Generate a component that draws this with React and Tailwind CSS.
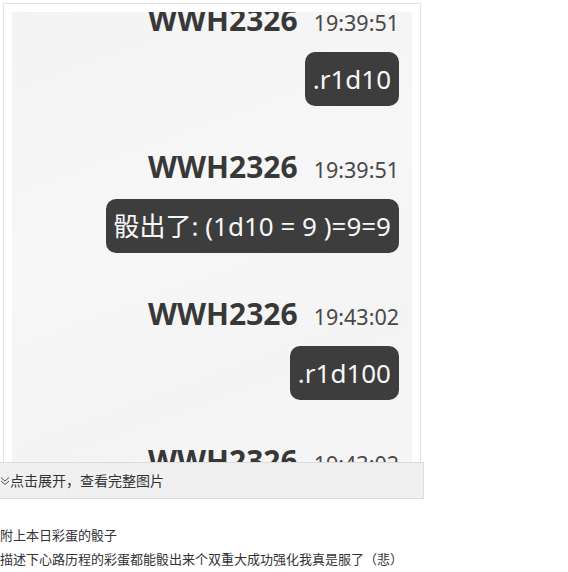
import { useState } from "react";

const messages = [
  { name: "WWH2326", time: "19:39:51", text: ".r1d10" },
  { name: "WWH2326", time: "19:39:51", text: "骰出了: (1d10 = 9 )=9=9" },
  { name: "WWH2326", time: "19:43:02", text: ".r1d100" },
  { name: "WWH2326", time: "19:43:02", text: ".r1d100" },
];

function ChatRow({ msg }) {
  return (
    <div className="flex flex-col items-end mb-[43px]">
      <div className="flex items-baseline justify-end gap-[16px] leading-[36px] h-[36px]">
        <span className="text-[30px] font-bold text-[#383838]">{msg.name}</span>
        <span className="text-[21.5px] text-[#484848]">{msg.time}</span>
      </div>
      <div className="mt-[14px] h-[54px] flex items-center px-[8px] rounded-[10px] bg-[#3d3d3d] text-[26px] text-[#f7f7f7] whitespace-nowrap">
        {msg.text}
      </div>
    </div>
  );
}

export default function App() {
  const [open, setOpen] = useState(false);

  return (
    <div className="w-[568px] h-[572px] overflow-hidden bg-white font-['Noto_Sans','Noto_Sans_CJK_SC',sans-serif]">
      <div className="pt-[3px] pl-[3px]">
        <div
          className={`w-[418px] ${open ? "" : "h-[459px]"} overflow-hidden bg-white border border-b-0 border-[#e3e3e3] pt-[8px] px-[8px]`}
        >
          <div className="w-[400px] h-[600px] overflow-hidden bg-[linear-gradient(160deg,#f3f3f3_0%,#f7f7f7_35%,#f4f4f4_60%,#f8f8f8_100%)] pr-[13px]">
            <div className="mt-[-10px]">
              {messages.map((m, i) => (
                <ChatRow key={i} msg={m} />
              ))}
            </div>
          </div>
        </div>
      </div>
      <button
        onClick={() => setOpen(!open)}
        className="w-[424px] h-[37px] flex items-center bg-[#f0f0f0] border border-l-0 border-[#dcdcdc] text-[14px] text-[#333] font-['Noto_Sans_CJK_SC','Noto_Sans',sans-serif] text-left"
      >
        <svg width="10" height="10" viewBox="0 0 10 10" className="shrink-0" fill="none" stroke="#555" strokeWidth="1">
          <polyline points="1,1.5 5,5 9,1.5" />
          <polyline points="1,5 5,8.5 9,5" />
        </svg>
        <span>点击展开，查看完整图片</span>
      </button>
      <div className="mt-[24px] text-[13px] leading-[24px] text-[#333] font-['Noto_Sans_CJK_SC',sans-serif]">
        <p>附上本日彩蛋的骰子</p>
        <p>描述下心路历程的彩蛋都能骰出来个双重大成功强化我真是服了（悲）</p>
      </div>
    </div>
  );
}
